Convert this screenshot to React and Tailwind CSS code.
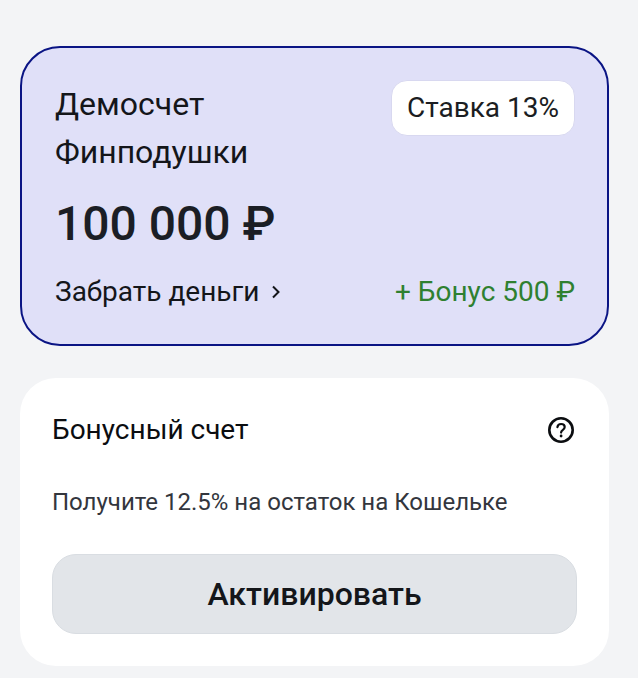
import React from 'react';

const font = { fontFamily: 'Roboto, "Noto Sans", sans-serif' };

function HelpIcon() {
  return (
    <svg className="mr-[2px]" width="28" height="28" viewBox="0 0 28 28" fill="none" stroke="#0b0d10" strokeWidth="2.6" strokeLinecap="round">
      <circle cx="14" cy="14" r="11.7" />
      <path d="M10.4 11.2c.3-2 1.8-3.2 3.7-3.2 2 0 3.6 1.3 3.6 3.1 0 1.5-.9 2.3-2 3-1 .7-1.6 1.2-1.6 2.5" strokeWidth="2.2" />
      <circle cx="14.1" cy="20" r="1.4" fill="#0b0d10" stroke="none" />
    </svg>
  );
}

export default function App() {
  return (
    <div style={font} className="h-[678px] w-[638px] overflow-hidden bg-[#f3f4f6] pt-[46px] pl-5 pr-[29px]">
      {/* demo account */}
      <div className="box-border h-[300px] rounded-[40px] border-2 border-[#0a1484] bg-[#e0e0f8] pt-[32px] pl-[33px] pr-[32px]">
        <div className="flex items-start justify-between">
          <div className="text-[32px] leading-[48px] text-[#14161a]">
            Демосчет
            <br />
            Финподушки
          </div>
          <div className="box-border flex h-[56px] w-[184px] items-center justify-center rounded-[16px] border border-[#d8d8f0] bg-white text-[28px] text-[#1b1d22]">
            Ставка 13%
          </div>
        </div>
        <div className="mt-[20px] text-[48px] leading-[56px] font-medium text-[#1b1e25]">100 000 ₽</div>
        <div className="mt-[22px] flex items-center justify-between">
          <div className="flex items-center gap-[13px] text-[28px] leading-[36px] text-[#14161a]">
            Забрать деньги
            <svg width="8" height="14" viewBox="0 0 8 14" fill="none" stroke="#14161a" strokeWidth="2">
              <path d="M1 1.5L6.5 7 1 12.5" />
            </svg>
          </div>
          <div className="text-[28px] leading-[36px] text-[#2f8030]">+ Бонус 500 ₽</div>
        </div>
      </div>

      {/* bonus account */}
      <div className="mt-[32px] h-[288px] rounded-[36px] bg-white pt-[32px] pl-[32px] pr-[32px]">
        <div className="flex h-[40px] items-center justify-between">
          <div className="text-[28px] text-[#0b0d10]">Бонусный счет</div>
          <HelpIcon />
        </div>
        <div className="mt-[36px] text-[24px] leading-[32px] text-[#33363d]">Получите 12.5% на остаток на Кошельке</div>
        <button className="mt-[36px] box-border h-[80px] w-full rounded-[24px] border border-[#d9dde2] bg-[#e2e5e9] text-[32px] font-medium text-[#14161a]">
          Активировать
        </button>
      </div>
    </div>
  );
}
